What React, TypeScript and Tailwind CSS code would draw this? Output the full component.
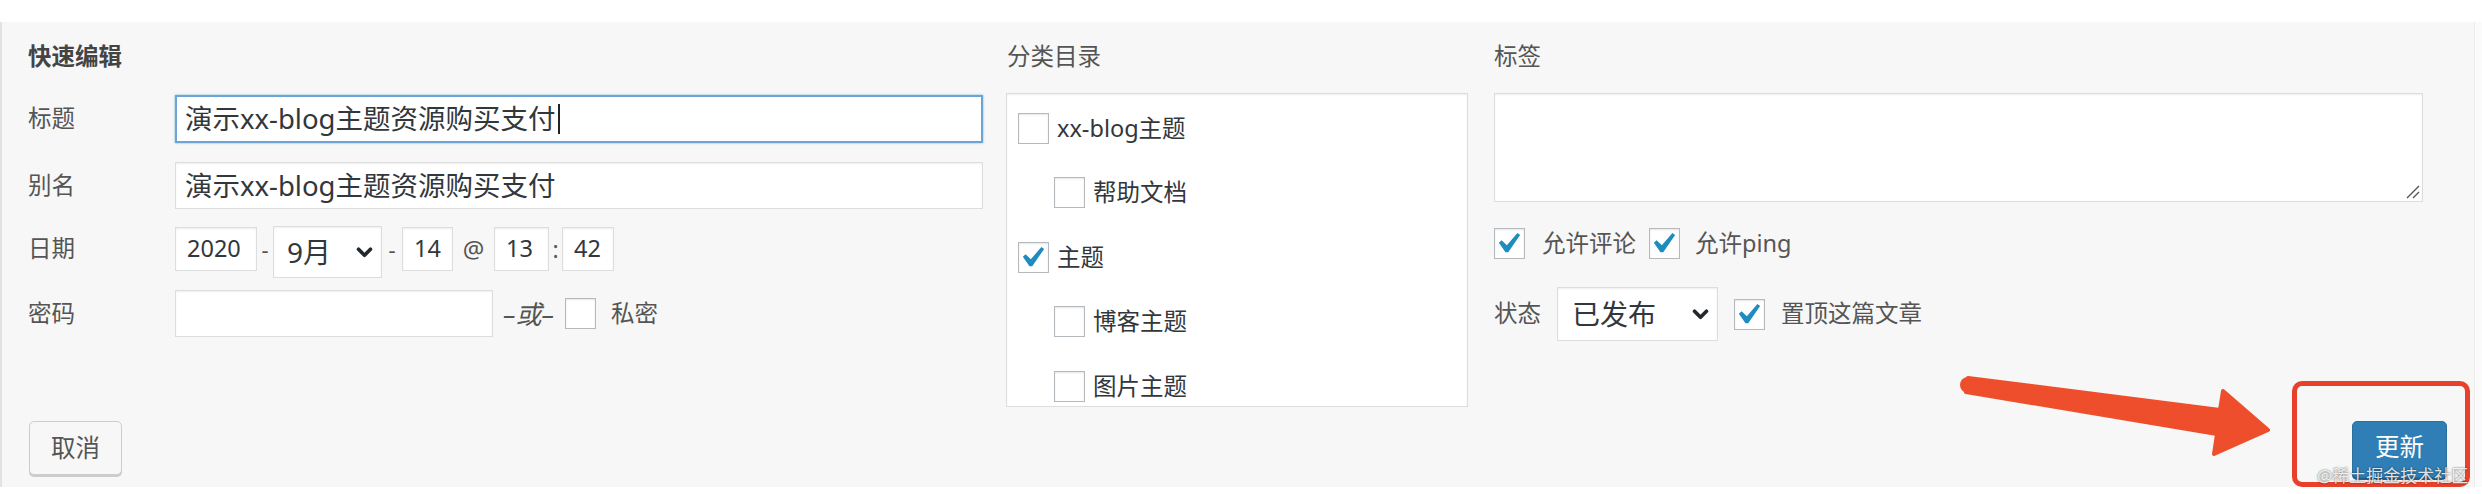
import React from "react";

function Check({ checked = false }: { checked?: boolean }) {
  return (
    <span className="relative block h-[31px] w-[31px] shrink-0 border border-[#b4b9be] bg-white shadow-[inset_0_1px_2px_rgba(0,0,0,0.1)]">
      {checked && (
        <svg
          viewBox="0 0 20 20"
          className="absolute left-[-8px] top-[-6px] h-[41px] w-[41px]"
          fill="#1e8cbe"
        >
          <path d="M14.83 4.89l1.34.94-5.81 8.38H9.02L5.78 9.67l1.34-1.25 2.57 2.4z" />
        </svg>
      )}
    </span>
  );
}

function Chevron() {
  return (
    <svg viewBox="0 0 18 12" className="h-[11px] w-[17px]" fill="none">
      <path d="M2.5 2.5 L9 9 L15.5 2.5" stroke="#23282d" strokeWidth="4" strokeLinecap="round" strokeLinejoin="round" />
    </svg>
  );
}

function SmallInput({ value, w }: { value: string; w: string }) {
  return (
    <div
      className={`mt-[1px] flex h-[44px] items-center border border-[#dddddd] bg-white pl-[11px] text-[23.5px] text-[#32373c] shadow-[inset_0_1px_2px_rgba(0,0,0,0.07)] ${w}`}
    >
      {value}
    </div>
  );
}

function CatItem({ label, checked, child }: { label: string; checked?: boolean; child?: boolean }) {
  return (
    <div className={`flex h-[64.5px] shrink-0 items-center gap-[8px] ${child ? "pl-[36px]" : ""}`}>
      <Check checked={checked} />
      <span className="text-[23.5px] text-[#32373c]">{label}</span>
    </div>
  );
}

export default function App() {
  return (
    <div className="relative h-[494px] w-[2482px] overflow-hidden bg-white font-['Noto_Sans','Noto_Sans_CJK_SC',sans-serif] leading-none">
      <div className="flex h-[487px] pt-[22px]">
        {/* panel */}
        <div className="flex h-[465px] w-[2474px] flex-col border-l-2 border-[#e2e2e2] bg-[#f7f7f7] pl-[26px] pr-[27px] pt-[19px]">
          <div className="flex items-start">
            {/* left column */}
            <div className="flex w-[955px] flex-col">
              <div className="flex h-[32px] items-center text-[23.5px] font-semibold text-[#444]">快速编辑</div>
              <div className="mt-[22px] flex h-[48px] items-center">
                <span className="w-[147px] text-[23.5px] text-[#555]">标题</span>
                <div className="flex h-[48px] w-[808px] items-center border-2 border-[#6ea3d8] bg-white pl-[8px] text-[27.5px] text-[#32373c] shadow-[0_0_2px_rgba(30,140,190,0.6)]">
                  演示xx-blog主题资源购买支付
                  <span className="ml-[2px] h-[30px] w-[2px] bg-[#222]" />
                </div>
              </div>
              <div className="mt-[19px] flex h-[47px] items-center">
                <span className="w-[147px] text-[23.5px] text-[#555]">别名</span>
                <div className="flex h-[47px] w-[808px] items-center border border-[#dddddd] bg-white pl-[9px] text-[27.5px] text-[#32373c] shadow-[inset_0_1px_2px_rgba(0,0,0,0.07)]">
                  演示xx-blog主题资源购买支付
                </div>
              </div>
              <div className="mt-[17px] flex h-[52px] items-start">
                <span className="flex h-[46px] w-[147px] items-center text-[23.5px] text-[#555]">日期</span>
                <SmallInput value="2020" w="w-[82px]" />
                <span className="flex h-[46px] w-[16px] items-center justify-center text-[22px] text-[#555]">-</span>
                <div className="flex h-[52px] w-[109px] items-center justify-between border border-[#dddddd] bg-white pl-[13px] pr-[8px] text-[28px] text-[#32373c] shadow-[inset_0_1px_2px_rgba(0,0,0,0.07)]">
                  <span>9月</span>
                  <Chevron />
                </div>
                <span className="flex h-[46px] w-[20px] items-center justify-center text-[22px] text-[#555]">-</span>
                <SmallInput value="14" w="w-[51px]" />
                <span className="flex h-[46px] w-[41px] items-center justify-center text-[24px] text-[#555]">@</span>
                <SmallInput value="13" w="w-[55px]" />
                <span className="flex h-[46px] w-[13px] items-center justify-center text-[23px] text-[#555]">:</span>
                <SmallInput value="42" w="w-[52px]" />
              </div>
              <div className="mt-[12px] flex h-[47px] items-center">
                <span className="w-[147px] text-[23.5px] text-[#555]">密码</span>
                <div className="h-[47px] w-[318px] border border-[#dddddd] bg-white shadow-[inset_0_1px_2px_rgba(0,0,0,0.07)]" />
                <span className="ml-[10px] text-[26px] italic text-[#555]">–或–</span>
                <span className="ml-[11px]">
                  <Check />
                </span>
                <span className="ml-[15px] text-[23.5px] text-[#555]">私密</span>
              </div>
            </div>

            {/* middle column */}
            <div className="ml-[23px] flex w-[462px] flex-col">
              <div className="flex h-[32px] items-center pl-[1px] text-[23.5px] text-[#555]">分类目录</div>
              <div className="mt-[20px] flex h-[314px] flex-col overflow-hidden border border-[#dddddd] bg-white pl-[11px] pt-[2px] shadow-[inset_0_1px_2px_rgba(0,0,0,0.07)]">
                <CatItem label="xx-blog主题" />
                <CatItem label="帮助文档" child />
                <CatItem label="主题" checked />
                <CatItem label="博客主题" child />
                <CatItem label="图片主题" child />
              </div>
            </div>

            {/* right column */}
            <div className="ml-[26px] flex w-[929px] flex-col">
              <div className="flex h-[32px] items-center text-[23.5px] text-[#555]">标签</div>
              <div className="relative mt-[20px] h-[109px] w-[929px] border border-[#dddddd] bg-white shadow-[inset_0_1px_2px_rgba(0,0,0,0.07)]">
                <svg viewBox="0 0 16 16" className="absolute bottom-[2px] right-[2px] h-[16px] w-[16px]" fill="none">
                  <path d="M15 3 L3 15 M15 9 L9 15" stroke="#555" strokeWidth="1.4" />
                </svg>
              </div>
              <div className="mt-[26px] flex h-[31px] items-center">
                <Check checked />
                <span className="ml-[17px] text-[23.5px] text-[#555]">允许评论</span>
                <span className="ml-[13px]">
                  <Check checked />
                </span>
                <span className="ml-[15px] text-[23.5px] text-[#555]">允许ping</span>
              </div>
              <div className="mt-[28px] flex h-[54px] items-center">
                <span className="w-[63px] text-[23.5px] text-[#555]">状态</span>
                <div className="flex h-[54px] w-[161px] items-center justify-between border border-[#dddddd] bg-white pl-[14px] pr-[8px] text-[28px] text-[#32373c] shadow-[inset_0_1px_2px_rgba(0,0,0,0.07)]">
                  <span>已发布</span>
                  <Chevron />
                </div>
                <span className="ml-[16px]">
                  <Check checked />
                </span>
                <span className="ml-[16px] text-[23.5px] text-[#555]">置顶这篇文章</span>
              </div>
            </div>
          </div>

          {/* bottom buttons */}
          <div className="mt-[14px] flex items-start justify-between">
            <button className="ml-[1px] flex h-[54px] w-[93px] items-center justify-center rounded-[5px] border border-[#cccccc] bg-[#f7f7f7] text-[24.5px] text-[#555] shadow-[0_2px_0_#cccccc]">
              取消
            </button>
            <button className="flex h-[57px] w-[95px] items-center justify-center rounded-[5px] border border-[#2a6f9e] bg-[#2f7fb6] pb-[4px] text-[24.5px] text-white shadow-[0_2px_0_#23628d]">
              更新
            </button>
          </div>
        </div>
        <div className="h-[465px] w-[8px] border-l border-[#ececec] bg-[#fbfbfb]" />
      </div>

      {/* annotation overlays */}
      <svg className="pointer-events-none absolute left-0 top-0 h-[494px] w-[2482px]" viewBox="0 0 2482 494">
        <polygon
          points="1968,378 2220,410 2223,391 2268,430 2214,454 2217,434 1966,392"
          fill="#ee4e2b"
          stroke="#ee4e2b"
          strokeWidth="4"
          strokeLinejoin="round"
        />
        <circle cx="1968" cy="385" r="8" fill="#ee4e2b" />
      </svg>
      <div className="pointer-events-none absolute left-[2292px] top-[381px] h-[106px] w-[178px] rounded-[10px] border-[5px] border-[#e8402a]" />
      <div className="pointer-events-none absolute left-[2317px] top-[467px] text-[17px] text-white/85 [text-shadow:0_0_2px_rgba(0,0,0,0.7)]">
        @稀土掘金技术社区
      </div>
    </div>
  );
}
